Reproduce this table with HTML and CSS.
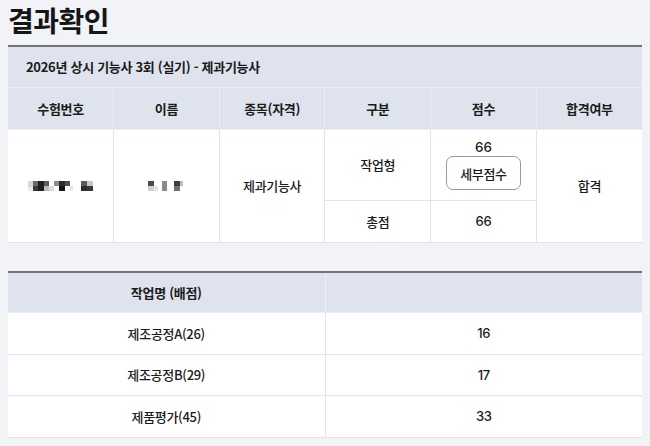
FILE: index.html
```html
<!DOCTYPE html>
<html lang="ko">
<head>
<meta charset="utf-8">
<link rel="stylesheet" href="styles.css">
</head>
<body>
<h1 class="title">결과확인</h1>
<table class="tbl result">
  <colgroup>
    <col class="c6"><col class="c6"><col class="c6"><col class="c6"><col class="c6"><col class="c6">
  </colgroup>
  <tr class="row-cap">
    <th colspan="6" class="caption">2026년 상시 기능사 3회 (실기) - 제과기능사</th>
  </tr>
  <tr class="row-head">
    <th>수험번호</th><th>이름</th><th>종목(자격)</th><th>구분</th><th>점수</th><th>합격여부</th>
  </tr>
  <tr class="row-tall">
    <td rowspan="2">
      <svg class="blur" width="66" height="14" viewBox="0 0 66 14">
        <rect x="0" y="2" width="5" height="6" fill="#d9d9d9"/>
        <rect x="0" y="8" width="5" height="4" fill="#ececec"/>
        <rect x="5" y="2" width="5" height="5" fill="#6a6a6a"/>
        <rect x="5" y="7" width="5" height="5" fill="#3a3a3a"/>
        <rect x="10" y="2" width="6" height="10" fill="#1e1e1e"/>
        <rect x="16" y="2" width="5" height="5" fill="#5a5a5a"/>
        <rect x="16" y="7" width="5" height="5" fill="#b9b9b9"/>
        <rect x="21" y="7" width="5" height="5" fill="#dcdcdc"/>
        <rect x="26" y="2" width="5" height="5" fill="#8d8d8d"/>
        <rect x="31" y="2" width="6" height="5" fill="#2a2a2a"/>
        <rect x="31" y="7" width="6" height="5" fill="#161616"/>
        <rect x="37" y="2" width="5" height="5" fill="#4e4e4e"/>
        <rect x="42" y="7" width="3" height="5" fill="#e6e6e6"/>
        <rect x="53" y="2" width="6" height="5" fill="#5b5b5b"/>
        <rect x="53" y="7" width="6" height="5" fill="#2c2c2c"/>
        <rect x="59" y="2" width="6" height="5" fill="#c7c7c7"/>
        <rect x="59" y="7" width="6" height="5" fill="#393939"/>
      </svg>
    </td>
    <td rowspan="2">
      <svg class="blur" width="36" height="14" viewBox="0 0 36 14">
        <rect x="0" y="2" width="6" height="5" fill="#4a4a4a"/>
        <rect x="0" y="7" width="6" height="5" fill="#cfcfcf"/>
        <rect x="6" y="7" width="4" height="5" fill="#e3e3e3"/>
        <rect x="14" y="2" width="5" height="10" fill="#8a8a8a"/>
        <rect x="26" y="2" width="6" height="5" fill="#3e3e3e"/>
        <rect x="26" y="7" width="6" height="5" fill="#6e6e6e"/>
        <rect x="32" y="2" width="3" height="5" fill="#bdbdbd"/>
      </svg>
    </td>
    <td rowspan="2">제과기능사</td>
    <td>작업형</td>
    <td class="score-cell">
      <div class="score-stack">
        <span class="num">66</span>
        <button class="detail-btn" type="button">세부점수</button>
      </div>
    </td>
    <td rowspan="2">합격</td>
  </tr>
  <tr class="row-norm">
    <td>총점</td>
    <td class="num">66</td>
  </tr>
</table>

<table class="tbl detail">
  <colgroup><col class="c2"><col class="c2"></colgroup>
  <tr class="row-head2">
    <th>작업명 (배점)</th><th></th>
  </tr>
  <tr class="row-item"><td>제조공정A(26)</td><td class="num">16</td></tr>
  <tr class="row-item"><td>제조공정B(29)</td><td class="num">17</td></tr>
  <tr class="row-item"><td>제품평가(45)</td><td class="num">33</td></tr>
</table>
</body>
</html>
```

FILE: styles.css
```css
html, body {
  margin: 0;
  padding: 0;
  background: #f2f3f7;
}
body {
  padding: 0 8px;
  font-family: "Noto Sans CJK KR", "Noto Sans", sans-serif;
  color: #1b1b1b;
  font-size: 13px;
}
.title {
  margin: 0 0 5px 0;
  font-size: 28px;
  line-height: 40px;
  font-weight: 700;
  letter-spacing: -0.5px;
  color: #161616;
}
.tbl {
  width: 634px;
  border-collapse: collapse;
  table-layout: fixed;
  border-top: 2px solid #707378;
  background: #ffffff;
}
.c6 { width: 16.666%; }
.c2 { width: 50%; }
.tbl th, .tbl td {
  border: 1px solid #e1e3e7;
  text-align: center;
  vertical-align: middle;
  padding: 0;
  font-size: 13px;
  letter-spacing: -0.3px;
}
.tbl td { font-weight: 500; }
.tbl th {
  border-color: #eceef3;
}
.tbl tr:first-child th { border-top: none; }
.tbl th:first-child, .tbl td:first-child { border-left: none; }
.tbl th:last-child, .tbl td:last-child { border-right: none; }
.tbl th {
  background: #dfe3ed;
  font-weight: 700;
  color: #1b1b1b;
}
.caption {
  text-align: left !important;
  padding-left: 18px !important;
}
.row-cap { height: 41px; }
.row-head { height: 42px; }
.row-tall { height: 71px; }
.row-norm { height: 42px; }
.row-head2 { height: 41px; }
.row-item { height: 41.5px; }
.num {
  font-family: "Inter", "Noto Sans CJK KR", sans-serif;
  font-size: 13.5px;
  font-weight: 500;
  letter-spacing: 0;
}
.blur { display: block; margin: 0 auto; }
.score-stack {
  display: flex;
  flex-direction: column;
  align-items: center;
  gap: 1px;
}
.detail-btn {
  width: 75px;
  height: 34px;
  border: 1px solid #9a9a9a;
  border-radius: 7px;
  background: #ffffff;
  font-family: "Noto Sans CJK KR", sans-serif;
  font-size: 13px;
  font-weight: 500;
  letter-spacing: -0.3px;
  color: #1b1b1b;
  padding: 0;
}
.detail {
  margin-top: 28px;
}
```
